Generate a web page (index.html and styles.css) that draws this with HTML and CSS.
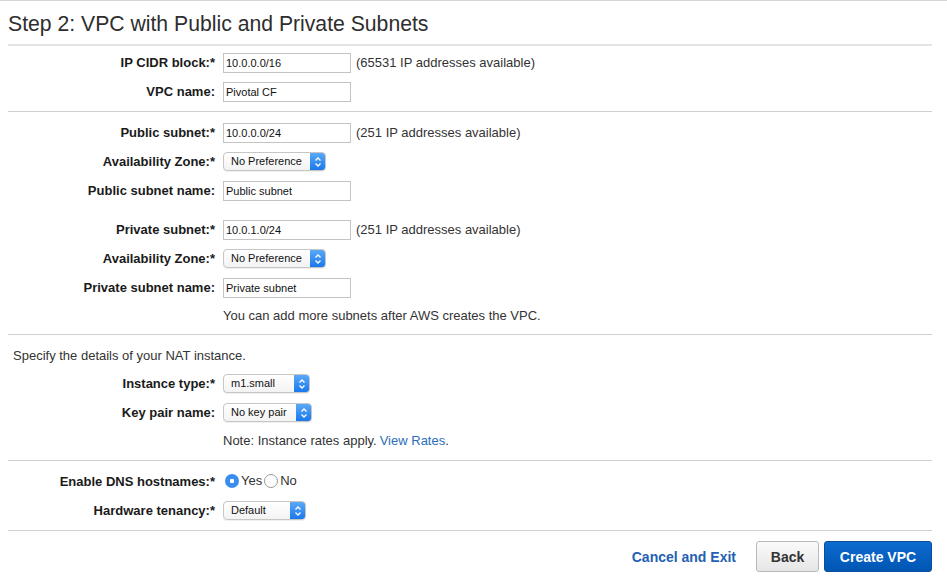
FILE: index.html
```html
<!DOCTYPE html>
<html>
<head>
<meta charset="utf-8">
<link rel="stylesheet" href="styles.css">
</head>
<body>
<div class="page">
  <h1 class="title">Step 2: VPC with Public and Private Subnets</h1>

  <section class="group g1">
    <div class="row"><label class="lbl">IP CIDR block:*</label><div class="ctl"><span class="input">10.0.0.0/16</span><span class="hint">(65531 IP addresses available)</span></div></div>
    <div class="row"><label class="lbl">VPC name:</label><div class="ctl"><span class="input">Pivotal CF</span></div></div>
  </section>

  <section class="group g2">
    <div class="row"><label class="lbl">Public subnet:*</label><div class="ctl"><span class="input">10.0.0.0/24</span><span class="hint">(251 IP addresses available)</span></div></div>
    <div class="row"><label class="lbl">Availability Zone:*</label><div class="ctl"><span class="select w102"><span class="sel-text">No Preference</span><span class="sel-arrow"><svg width="8" height="12" viewBox="0 0 8 12"><path d="M1.5 4.5 L4 2 L6.5 4.5 M1.5 7.5 L4 10 L6.5 7.5" fill="none" stroke="#fff" stroke-width="1.3"/></svg></span></span></div></div>
    <div class="row"><label class="lbl">Public subnet name:</label><div class="ctl"><span class="input">Public subnet</span></div></div>
    <div class="row spaced"><label class="lbl">Private subnet:*</label><div class="ctl"><span class="input">10.0.1.0/24</span><span class="hint">(251 IP addresses available)</span></div></div>
    <div class="row"><label class="lbl">Availability Zone:*</label><div class="ctl"><span class="select w102"><span class="sel-text">No Preference</span><span class="sel-arrow"><svg width="8" height="12" viewBox="0 0 8 12"><path d="M1.5 4.5 L4 2 L6.5 4.5 M1.5 7.5 L4 10 L6.5 7.5" fill="none" stroke="#fff" stroke-width="1.3"/></svg></span></span></div></div>
    <div class="row"><label class="lbl">Private subnet name:</label><div class="ctl"><span class="input">Private subnet</span></div></div>
    <div class="row note-row"><span></span><div class="ctl note">You can add more subnets after AWS creates the VPC.</div></div>
  </section>

  <section class="group g3">
    <p class="intro">Specify the details of your NAT instance.</p>
    <div class="row"><label class="lbl">Instance type:*</label><div class="ctl"><span class="select w86"><span class="sel-text">m1.small</span><span class="sel-arrow"><svg width="8" height="12" viewBox="0 0 8 12"><path d="M1.5 4.5 L4 2 L6.5 4.5 M1.5 7.5 L4 10 L6.5 7.5" fill="none" stroke="#fff" stroke-width="1.3"/></svg></span></span></div></div>
    <div class="row"><label class="lbl">Key pair name:</label><div class="ctl"><span class="select w88"><span class="sel-text">No key pair</span><span class="sel-arrow"><svg width="8" height="12" viewBox="0 0 8 12"><path d="M1.5 4.5 L4 2 L6.5 4.5 M1.5 7.5 L4 10 L6.5 7.5" fill="none" stroke="#fff" stroke-width="1.3"/></svg></span></span></div></div>
    <div class="row note-row"><span></span><div class="ctl note">Note: Instance rates apply. <a class="link" href="#">View Rates</a>.</div></div>
  </section>

  <section class="group g4">
    <div class="row"><label class="lbl">Enable DNS hostnames:*</label><div class="ctl radios"><span class="radio on"></span><span class="rlabel">Yes</span><span class="radio"></span><span class="rlabel">No</span></div></div>
    <div class="row"><label class="lbl">Hardware tenancy:*</label><div class="ctl"><span class="select w82"><span class="sel-text">Default</span><span class="sel-arrow"><svg width="8" height="12" viewBox="0 0 8 12"><path d="M1.5 4.5 L4 2 L6.5 4.5 M1.5 7.5 L4 10 L6.5 7.5" fill="none" stroke="#fff" stroke-width="1.3"/></svg></span></span></div></div>
  </section>

  <footer class="actions">
    <a class="cancel" href="#">Cancel and Exit</a>
    <button class="btn back">Back</button>
    <button class="btn primary">Create VPC</button>
  </footer>
</div>
</body>
</html>
```

FILE: styles.css
```css
html, body {
  margin: 0;
  padding: 0;
  background: #fff;
}
body {
  font-family: "Liberation Sans", Arial, Helvetica, sans-serif;
  color: #222;
  border-top: 1px solid #d6d6d6;
}
.page {
  margin-left: 8px;
  width: 924px;
}
.title {
  margin: 0;
  font-size: 21.2px;
  font-weight: normal;
  color: #2e2e2e;
  padding: 11px 0 8px 0;
  line-height: 24px;
  border-bottom: 2px solid #e3e3e3;
}
.group {
  border-bottom: 1px solid #d0d0d0;
}
.g1 { padding: 2px 0 5px; }
.g2 { padding: 6px 0 6px; }
.g3 { padding: 8px 0 7px; }
.g4 { padding: 6px 0 5px; }
.row {
  display: grid;
  grid-template-columns: 207px 1fr;
  column-gap: 8px;
  align-items: center;
  height: 29px;
}
.row.spaced { margin-top: 10px; }
.row.note-row { height: 26px; }
.lbl {
  text-align: right;
  font-weight: bold;
  font-size: 13px;
  color: #1a1a1a;
}
.ctl {
  display: flex;
  align-items: center;
  font-size: 13px;
}
.input {
  box-sizing: border-box;
  width: 128px;
  height: 20px;
  border: 1px solid #c4c4c4;
  padding: 0 2px;
  font-size: 11px;
  line-height: 18px;
  color: #111;
  background: #fff;
}
.hint {
  margin-left: 5px;
  font-size: 13px;
  color: #333;
}
.note {
  font-size: 13px;
  color: #333;
}
.intro {
  margin: 0 0 0 5px;
  font-size: 13px;
  color: #333;
  height: 26px;
  line-height: 26px;
}
.link {
  color: #2a6ebb;
  text-decoration: none;
  margin-left: 3px;
}
.select {
  box-sizing: border-box;
  display: flex;
  height: 19px;
  border: 1px solid #c6c6c6;
  border-radius: 4px;
  background: linear-gradient(#ffffff, #f3f3f3);
  overflow: hidden;
  box-shadow: 0 1px 0 rgba(0,0,0,0.06);
}
.w102 { width: 103px; }
.w86 { width: 87px; }
.w88 { width: 89px; }
.w82 { width: 83px; }
.sel-text {
  flex: 1;
  font-size: 11px;
  line-height: 17px;
  padding-left: 7px;
  color: #111;
}
.sel-arrow {
  width: 15px;
  display: flex;
  align-items: center;
  justify-content: center;
  background: linear-gradient(#5aa9f8, #1a78ec);
}
.radios { gap: 0; }
.radio {
  box-sizing: border-box;
  width: 14px;
  height: 14px;
  border-radius: 50%;
  border: 1px solid #9a9a9a;
  background: #fff;
  margin-left: 2px;
  margin-top: -1px;
}
.radio.on {
  border: none;
  background: radial-gradient(circle, #fff 0 2px, #3b8df0 2.5px);
}
.rlabel {
  font-size: 13px;
  margin-left: 2px;
  margin-top: -2px;
  color: #333;
}
.actions {
  display: flex;
  justify-content: flex-end;
  align-items: center;
  padding-top: 10px;
  height: 31px;
}
.cancel {
  font-size: 14px;
  font-weight: bold;
  color: #1f5fb4;
  text-decoration: none;
  margin-right: 20px;
}
.btn {
  box-sizing: border-box;
  font-family: "Liberation Sans", Arial, sans-serif;
  font-weight: bold;
  font-size: 14px;
  height: 31px;
  border-radius: 3px;
  cursor: pointer;
}
.back {
  width: 63px;
  border: 1px solid #b9b9b9;
  background: linear-gradient(#fafafa, #e6e6e6);
  color: #333;
  margin-right: 5px;
}
.primary {
  width: 108px;
  border: 1px solid #0a4f9e;
  background: linear-gradient(#0d6bcf, #0056b3);
  color: #fff;
}
```
